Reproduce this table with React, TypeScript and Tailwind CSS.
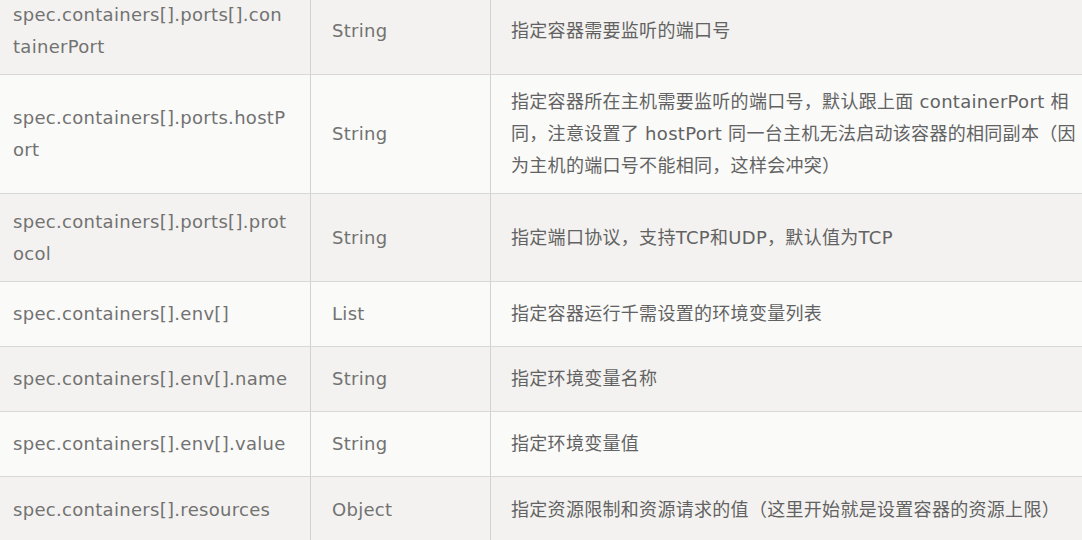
import React from "react";

type Row = { name: string[]; type: string; desc: string[]; h: string };

const rows: Row[] = [
  { name: ["spec.containers[].ports[].con", "tainerPort"], type: "String", desc: ["指定容器需要监听的端口号"], h: "h-[87px]" },
  {
    name: ["spec.containers[].ports.hostP", "ort"],
    type: "String",
    desc: [
      "指定容器所在主机需要监听的端口号，默认跟上面 containerPort 相",
      "同，注意设置了 hostPort 同一台主机无法启动该容器的相同副本（因",
      "为主机的端口号不能相同，这样会冲突）",
    ],
    h: "h-[119px]",
  },
  { name: ["spec.containers[].ports[].prot", "ocol"], type: "String", desc: ["指定端口协议，支持TCP和UDP，默认值为TCP"], h: "h-[88px]" },
  { name: ["spec.containers[].env[]"], type: "List", desc: ["指定容器运行千需设置的环境变量列表"], h: "h-[65px]" },
  { name: ["spec.containers[].env[].name"], type: "String", desc: ["指定环境变量名称"], h: "h-[65px]" },
  { name: ["spec.containers[].env[].value"], type: "String", desc: ["指定环境变量值"], h: "h-[65px]" },
  { name: ["spec.containers[].resources"], type: "Object", desc: ["指定资源限制和资源请求的值（这里开始就是设置容器的资源上限）"], h: "h-[66px]" },
];

export default function App() {
  return (
    <div
      className="w-[1082px] h-[540px] overflow-hidden bg-[#fafaf9] text-[#727272] text-[18px] leading-[32px] tracking-[0.3px]"
      style={{ fontFamily: '"DejaVu Sans", "Noto Sans CJK SC", sans-serif' }}
    >
      <div className="-mt-[12px] flex flex-col">
        {rows.map((r, i) => (
          <div
            key={i}
            className={`grid grid-cols-[311px_180px_1fr] border-b border-[#d8d8d6] ${r.h} ${
              i % 2 === 0 ? "bg-[#f3f2f0]" : "bg-[#fafaf9]"
            }`}
          >
            <div className="flex flex-col justify-center pl-[13px] border-r border-[#d2d2d0] whitespace-nowrap">
              {r.name.map((l, j) => (
                <span key={j}>{l}</span>
              ))}
            </div>
            <div className="flex items-center pl-[21px] border-r border-[#d2d2d0]">{r.type}</div>
            <div className="flex flex-col justify-center pl-[20px] whitespace-nowrap text-[#626262]">
              {r.desc.map((l, j) => (
                <span key={j}>{l}</span>
              ))}
            </div>
          </div>
        ))}
      </div>
    </div>
  );
}
